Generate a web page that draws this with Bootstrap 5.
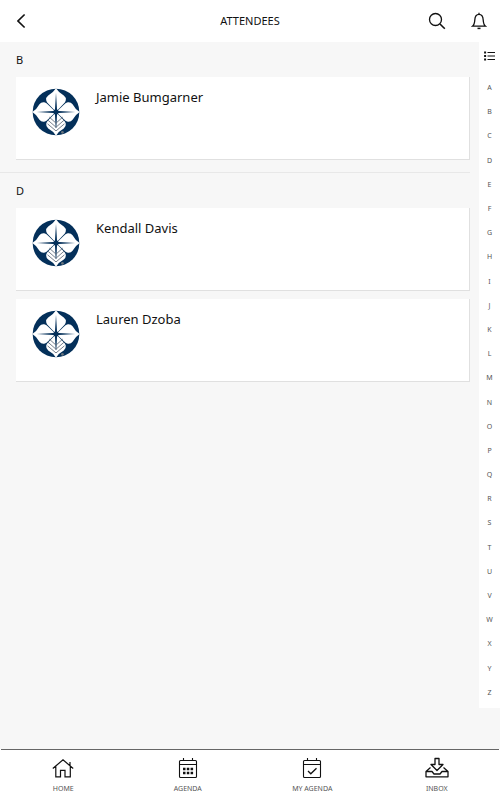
<!DOCTYPE html>
<html lang="en">
<head>
<meta charset="utf-8">
<meta name="viewport" content="width=device-width, initial-scale=1">
<title>Attendees</title>
<link href="https://cdn.jsdelivr.net/npm/bootstrap@5.3.0/dist/css/bootstrap.min.css" rel="stylesheet">
<style>
body { font-family: "Noto Sans", "Open Sans", sans-serif; background: #f7f7f7; color: #111; }
svg { display: block; }
.top-bar { height: 42px; }
.side { flex: 1 1 0; padding: 0 13px; }
.side-end { gap: 25px; }
.page-title { font-size: 11px; line-height: 16px; }
.icon-btn { padding: 0; border: 0; background: none; color: #111; }
.people { padding-left: 16px; padding-right: 9px; }
.group + .group { border-top: 1px solid #e8e8e8; margin-left: -16px; padding-left: 16px; }
.group { padding-bottom: 12px; }
.group-letter { font-size: 11px; line-height: 35px; font-weight: 400; }
.person { min-height: 83px; padding: 11px 16px; gap: 16px; border: 0 solid #e0e0e0; border-width: 0 1px 1px 0; color: #111; font-size: 13px; line-height: 18px; background: #fff; }
.person + .person { margin-top: 8px; }
.person svg { width: 48px; height: 48px; }
.rail { width: 21px; margin-bottom: 41px; padding-bottom: 3px; }
.rail-menu { height: 34px; padding: 8px 4px 0 5px; }
.rail a { font-size: 7px; line-height: 12px; color: #555; }
.tabs { height: 51px; border-top: 1px solid #666; margin: 0 1px; }
.tabs a { flex: 1 1 0; padding-top: 6px; gap: 3px; font-size: 7px; line-height: 12px; color: #555; }
.tabs svg { color: #111; }
</style>
<script src="https://cdn.jsdelivr.net/npm/bootstrap@5.3.0/dist/js/bootstrap.bundle.min.js"></script>
</head>
<body class="d-flex flex-column min-vh-100">
<svg width="0" height="0" class="position-absolute" aria-hidden="true">
  <defs>
    <path id="petal" d="M71 1Q79 14 94 22Q101 27 100 36Q99 42 93 47L74 67H68L49 47Q43 42 42 36Q41 27 48 22Q63 14 71 1Z"/>
    <symbol id="emblem" viewBox="0 0 142 142">
      <circle cx="71" cy="71" r="69" fill="#04305a"/>
      <g fill="#fff">
        <use href="#petal"/>
        <use href="#petal" transform="rotate(90 71 71)"/>
        <use href="#petal" transform="rotate(180 71 71)"/>
        <use href="#petal" transform="rotate(270 71 71)"/>
      </g>
      <path d="M71 14L74 63L79 68L128 71L79 74L74 79L72 118H70L68 79L63 74L14 71L63 68L68 63Z" fill="#04305a"/>
      <path d="M51 86L71 104L91 86M47 95L71 116L95 95M46 106L71 127L96 106" fill="none" stroke="#5f6a78" stroke-width="2.500"/>
      <circle cx="90" cy="131" r="4" fill="#69747d"/>
    </symbol>
  </defs>
</svg>

<header class="top-bar bg-white d-flex align-items-center">
  <div class="side d-flex">
    <button class="icon-btn ms-1" type="button" aria-label="Back">
      <svg width="10" height="16" viewBox="0 0 10 16" fill="none" stroke="currentColor" stroke-width="1.600"><path d="M7.600 1.500L1 8l6.600 6.500"/></svg>
    </button>
  </div>
  <h1 class="page-title fw-normal mb-0">ATTENDEES</h1>
  <div class="side side-end d-flex justify-content-end align-items-center">
    <button class="icon-btn" type="button" aria-label="Search">
      <svg width="18" height="18" viewBox="0 0 18 18" fill="none" stroke="currentColor" stroke-width="1.300"><circle cx="7.500" cy="7.500" r="6"/><path d="M12 12l4.800 4.800" stroke-width="1.600"/></svg>
    </button>
    <button class="icon-btn" type="button" aria-label="Notifications">
      <svg width="16" height="18" viewBox="0 0 16 18" fill="none" stroke="currentColor" stroke-width="1.300"><path d="M8 .8v1.500M1.500 14.200h13c-2-1.500-2.100-3-2.300-6.200C12 4.300 10.300 2.400 8 2.400S4 4.300 3.800 8c-.2 3.200-.3 4.700-2.300 6.200z"/><path d="M6.500 16.400h3" stroke-width="1.500"/></svg>
    </button>
  </div>
</header>

<div class="d-flex flex-grow-1">
  <main class="people flex-grow-1">
    <section class="group">
      <h2 class="group-letter mb-0">B</h2>
      <a href="#jamie" class="person d-flex text-decoration-none"><svg aria-hidden="true"><use href="#emblem"/></svg><span>Jamie Bumgarner</span></a>
    </section>
    <section class="group">
      <h2 class="group-letter mb-0">D</h2>
      <a href="#kendall" class="person d-flex text-decoration-none"><svg aria-hidden="true"><use href="#emblem"/></svg><span>Kendall Davis</span></a>
      <a href="#lauren" class="person d-flex text-decoration-none"><svg aria-hidden="true"><use href="#emblem"/></svg><span>Lauren Dzoba</span></a>
    </section>
  </main>
  <nav class="rail bg-white d-flex flex-column" aria-label="Alphabet">
    <button class="icon-btn rail-menu d-flex align-items-start" type="button" aria-label="All letters">
      <svg width="12" height="12" viewBox="0 0 12 12" fill="none" stroke="currentColor" stroke-width="1.200"><path d="M3.500 2.500H11M3.500 6H11M3.500 9.500H11"/><path d="M.1 2.500h2M.1 6h2M.1 9.500h2" stroke-width="1.900"/></svg>
    </button>
    <a class="flex-fill d-flex align-items-center justify-content-center text-decoration-none" href="#A">A</a>
    <a class="flex-fill d-flex align-items-center justify-content-center text-decoration-none" href="#B">B</a>
    <a class="flex-fill d-flex align-items-center justify-content-center text-decoration-none" href="#C">C</a>
    <a class="flex-fill d-flex align-items-center justify-content-center text-decoration-none" href="#D">D</a>
    <a class="flex-fill d-flex align-items-center justify-content-center text-decoration-none" href="#E">E</a>
    <a class="flex-fill d-flex align-items-center justify-content-center text-decoration-none" href="#F">F</a>
    <a class="flex-fill d-flex align-items-center justify-content-center text-decoration-none" href="#G">G</a>
    <a class="flex-fill d-flex align-items-center justify-content-center text-decoration-none" href="#H">H</a>
    <a class="flex-fill d-flex align-items-center justify-content-center text-decoration-none" href="#I">I</a>
    <a class="flex-fill d-flex align-items-center justify-content-center text-decoration-none" href="#J">J</a>
    <a class="flex-fill d-flex align-items-center justify-content-center text-decoration-none" href="#K">K</a>
    <a class="flex-fill d-flex align-items-center justify-content-center text-decoration-none" href="#L">L</a>
    <a class="flex-fill d-flex align-items-center justify-content-center text-decoration-none" href="#M">M</a>
    <a class="flex-fill d-flex align-items-center justify-content-center text-decoration-none" href="#N">N</a>
    <a class="flex-fill d-flex align-items-center justify-content-center text-decoration-none" href="#O">O</a>
    <a class="flex-fill d-flex align-items-center justify-content-center text-decoration-none" href="#P">P</a>
    <a class="flex-fill d-flex align-items-center justify-content-center text-decoration-none" href="#Q">Q</a>
    <a class="flex-fill d-flex align-items-center justify-content-center text-decoration-none" href="#R">R</a>
    <a class="flex-fill d-flex align-items-center justify-content-center text-decoration-none" href="#S">S</a>
    <a class="flex-fill d-flex align-items-center justify-content-center text-decoration-none" href="#T">T</a>
    <a class="flex-fill d-flex align-items-center justify-content-center text-decoration-none" href="#U">U</a>
    <a class="flex-fill d-flex align-items-center justify-content-center text-decoration-none" href="#V">V</a>
    <a class="flex-fill d-flex align-items-center justify-content-center text-decoration-none" href="#W">W</a>
    <a class="flex-fill d-flex align-items-center justify-content-center text-decoration-none" href="#X">X</a>
    <a class="flex-fill d-flex align-items-center justify-content-center text-decoration-none" href="#Y">Y</a>
    <a class="flex-fill d-flex align-items-center justify-content-center text-decoration-none" href="#Z">Z</a>
  </nav>
</div>

<footer class="bg-white">
  <nav class="tabs d-flex" aria-label="Main">
    <a href="#home" class="d-flex flex-column align-items-center text-decoration-none">
      <svg width="24" height="24" viewBox="0 0 24 24" fill="none" stroke="currentColor" stroke-width="1.200"><path d="M1.800 12.500L12 3.800l10.200 8.700M4.800 10.500v10.400h4.700v-6.500h4.500v6.500h5.300V10.500M19 9.500V6"/></svg>
      <span>HOME</span>
    </a>
    <a href="#agenda" class="d-flex flex-column align-items-center text-decoration-none">
      <svg width="24" height="24" viewBox="0 0 24 24" fill="none" stroke="currentColor" stroke-width="1.100"><rect x="3.500" y="4.500" width="17" height="17" rx="1"/><path d="M3.500 8.500h17M7.500 2v2.500M16.500 2v2.500"/><path d="M7 13h2.500M10.800 13h2.500M14.600 13h2.500M7 17h2.500M10.800 17h2.500M14.600 17h2.500" stroke-width="2.500"/></svg>
      <span>AGENDA</span>
    </a>
    <a href="#my-agenda" class="d-flex flex-column align-items-center text-decoration-none">
      <svg width="24" height="24" viewBox="0 0 24 24" fill="none" stroke="currentColor" stroke-width="1.100"><rect x="3.500" y="4.500" width="17" height="17" rx="1"/><path d="M3.500 8.500h17M7.500 2v2.500M16.500 2v2.500"/><path d="M8 15l2.800 2.800 5.700-5.600" stroke-width="1.300"/></svg>
      <span>MY AGENDA</span>
    </a>
    <a href="#inbox" class="d-flex flex-column align-items-center text-decoration-none">
      <svg width="24" height="24" viewBox="0 0 24 24" fill="none" stroke="currentColor" stroke-width="1.300" stroke-linejoin="round"><path d="M10 2.500h4v6h4l-6 6-6-6h4zM5.500 11.500L1 15.500v5.300h22v-5.300l-4.500-4M1 15.500h6l2 2.500h6l2-2.500h6"/></svg>
      <span>INBOX</span>
    </a>
  </nav>
</footer>
</body>
</html>
